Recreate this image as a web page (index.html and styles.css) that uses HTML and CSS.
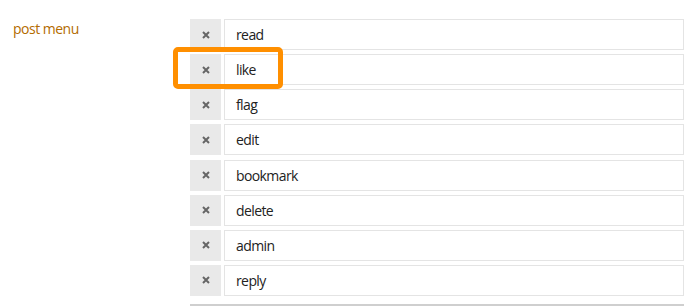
FILE: index.html
```html
<!DOCTYPE html>
<html>
<head>
<meta charset="utf-8">
<link rel="stylesheet" href="styles.css">
</head>
<body>
<div class="setting">
  <div class="label">post menu</div>
  <div class="list">
    <div class="row"><span class="remove"><svg viewBox="0 0 8 8"><path d="M1 1L7 7M7 1L1 7"/></svg></span><span class="value">read</span></div>
    <div class="row"><span class="remove"><svg viewBox="0 0 8 8"><path d="M1 1L7 7M7 1L1 7"/></svg></span><span class="value">like</span><span class="highlight"></span></div>
    <div class="row"><span class="remove"><svg viewBox="0 0 8 8"><path d="M1 1L7 7M7 1L1 7"/></svg></span><span class="value">flag</span></div>
    <div class="row"><span class="remove"><svg viewBox="0 0 8 8"><path d="M1 1L7 7M7 1L1 7"/></svg></span><span class="value">edit</span></div>
    <div class="row"><span class="remove"><svg viewBox="0 0 8 8"><path d="M1 1L7 7M7 1L1 7"/></svg></span><span class="value">bookmark</span></div>
    <div class="row"><span class="remove"><svg viewBox="0 0 8 8"><path d="M1 1L7 7M7 1L1 7"/></svg></span><span class="value">delete</span></div>
    <div class="row"><span class="remove"><svg viewBox="0 0 8 8"><path d="M1 1L7 7M7 1L1 7"/></svg></span><span class="value">admin</span></div>
    <div class="row"><span class="remove"><svg viewBox="0 0 8 8"><path d="M1 1L7 7M7 1L1 7"/></svg></span><span class="value">reply</span></div>
    <div class="divider"></div>
  </div>
</div>
</body>
</html>
```

FILE: styles.css
```css
html, body {
  margin: 0;
  padding: 0;
  background: #fff;
  font-family: "Open Sans", "Noto Sans", sans-serif;
}
.setting {
  display: flex;
  padding-top: 19px;
}
.label {
  width: 177px;
  padding-left: 13px;
  padding-top: 1px;
  font-size: 14px;
  letter-spacing: -0.5px;
  color: #b36b00;
  line-height: 18px;
}
.list {
  width: 494px;
  display: flex;
  flex-direction: column;
  gap: 4.15px;
}
.row {
  position: relative;
  display: flex;
  gap: 3px;
  height: 31px;
}
.remove {
  width: 31px;
  background: #e9e9e9;
  display: flex;
  align-items: center;
  justify-content: center;
}
.remove svg {
  width: 8px;
  height: 8px;
  stroke: #666;
  stroke-width: 2;
  fill: none;
}
.value {
  flex: 1;
  border: 1px solid #e4e4e4;
  box-sizing: border-box;
  padding-left: 11px;
  display: flex;
  align-items: center;
  font-size: 14px;
  letter-spacing: -0.6px;
  color: #222;
}
.highlight {
  position: absolute;
  left: -17px;
  top: -7px;
  width: 110px;
  height: 42px;
  box-sizing: border-box;
  border: 5px solid #ff8f00;
  border-radius: 5px;
}
.divider {
  margin-top: 4px;
  height: 2px;
  background: #cfcfcf;
}
```
